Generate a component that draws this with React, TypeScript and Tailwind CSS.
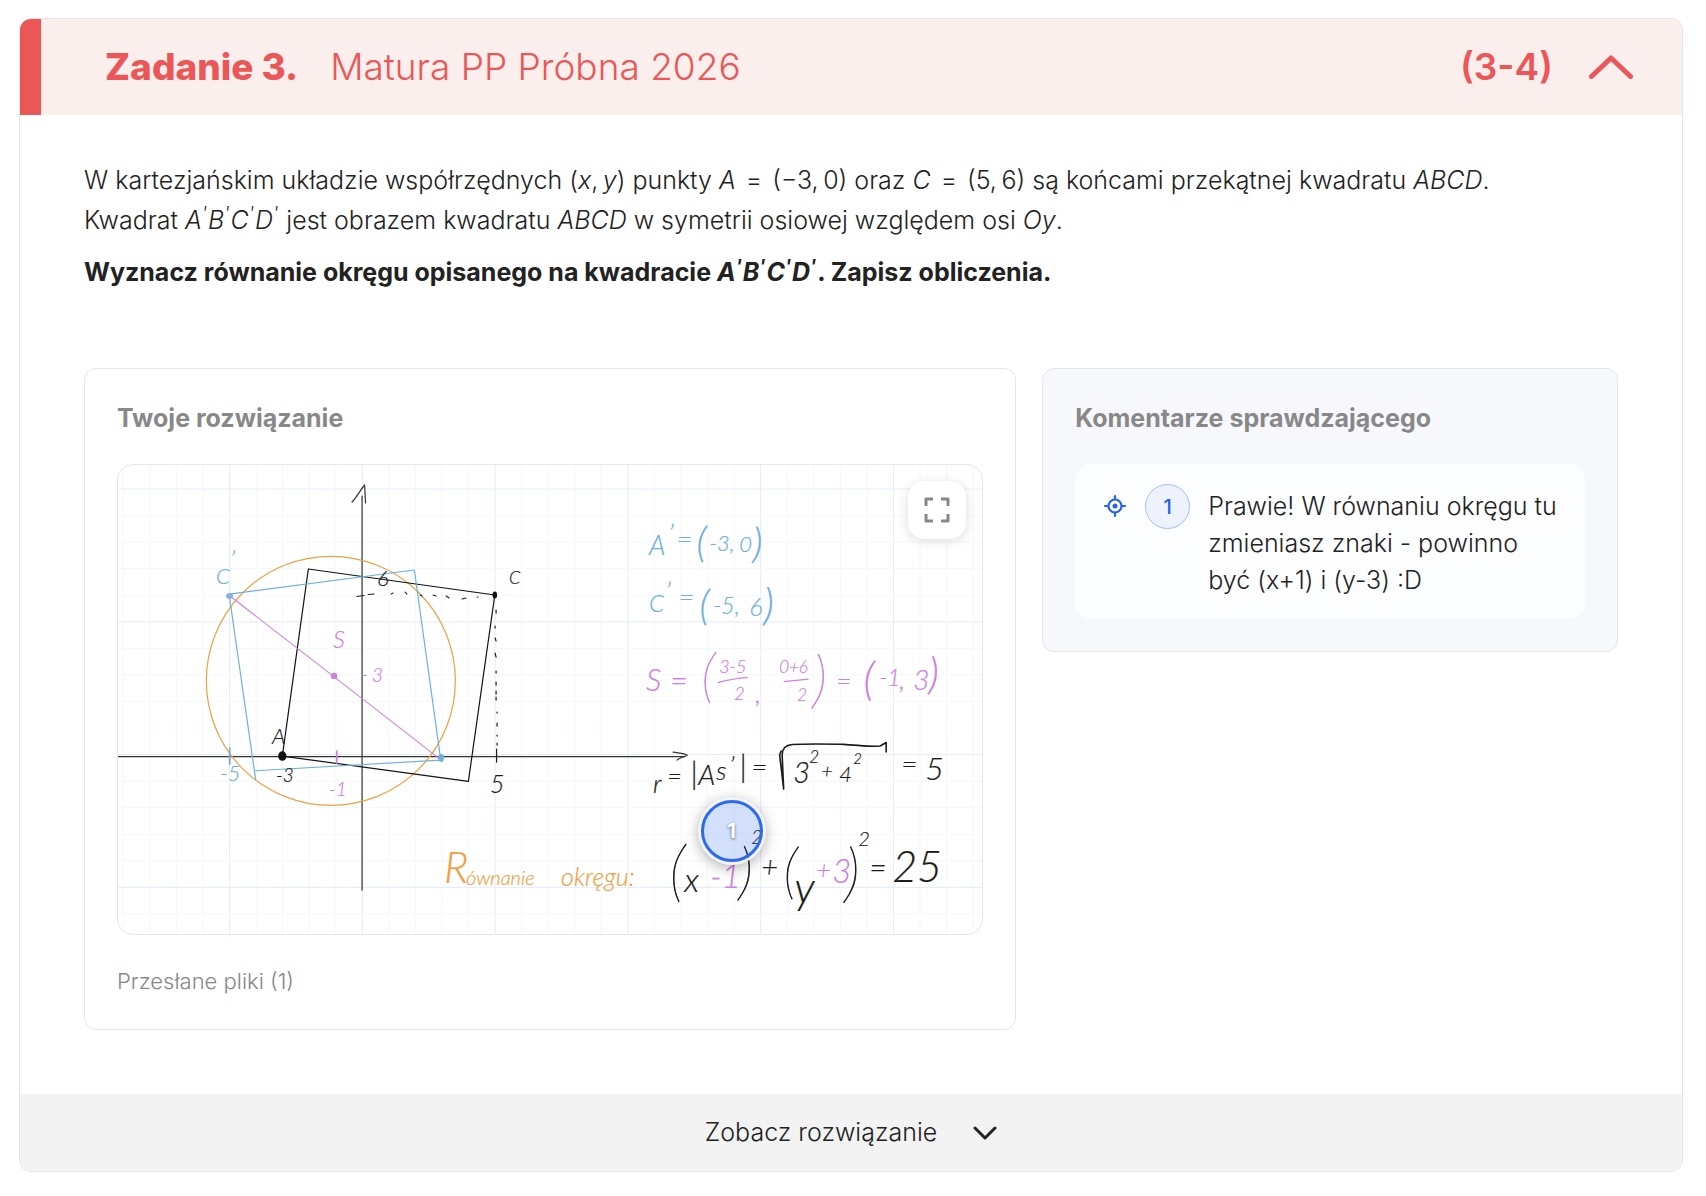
import { useState } from 'react'
import type { ReactNode } from 'react'

const INK = '#1b1b1b'
const BLUE = '#6fb0dc'
const PURPLE = '#cf7fe0'
const ORANGE = '#efa03f'

const SHEET_WIDTH = 864
const SHEET_HEIGHT = 469
const CELL = 26.55

type Note = { x: number; y: number; size: number; color: string; text: string }

const NOTES: Note[] = [
  // labels on the plot
  { x: 98, y: 119, size: 22, color: BLUE, text: 'C' },
  { x: 112, y: 104, size: 26, color: BLUE, text: '’' },
  { x: 259, y: 121, size: 22, color: INK, text: '6' },
  { x: 391, y: 119, size: 18, color: INK, text: 'C' },
  { x: 215, y: 183, size: 24, color: PURPLE, text: 'S' },
  { x: 242, y: 217, size: 22, color: PURPLE, text: '-' },
  { x: 254, y: 217, size: 19, color: PURPLE, text: '3' },
  { x: 154, y: 279, size: 22, color: INK, text: 'A' },
  { x: 102, y: 316, size: 22, color: BLUE, text: '-5' },
  { x: 158, y: 317, size: 19, color: INK, text: '-3' },
  { x: 211, y: 331, size: 19, color: PURPLE, text: '-1' },
  { x: 372, y: 328, size: 25, color: INK, text: '5' },

  // A' = (-3, 0)
  { x: 531, y: 90, size: 27, color: BLUE, text: 'A' },
  { x: 550, y: 79, size: 28, color: BLUE, text: '’' },
  { x: 558, y: 84, size: 28, color: BLUE, text: '=' },
  { x: 578, y: 92, size: 42, color: BLUE, text: '(' },
  { x: 591, y: 86, size: 22, color: BLUE, text: '-3,' },
  { x: 621, y: 87, size: 22, color: BLUE, text: '0' },
  { x: 634, y: 93, size: 42, color: BLUE, text: ')' },

  // C' = (-5, 6)
  { x: 531, y: 147, size: 24, color: BLUE, text: 'C' },
  { x: 547, y: 137, size: 28, color: BLUE, text: '’' },
  { x: 560, y: 142, size: 28, color: BLUE, text: '=' },
  { x: 581, y: 155, size: 42, color: BLUE, text: '(' },
  { x: 595, y: 149, size: 23, color: BLUE, text: '-5,' },
  { x: 631, y: 151, size: 25, color: BLUE, text: '6' },
  { x: 645, y: 155, size: 43, color: BLUE, text: ')' },

  // S
  { x: 528, y: 226, size: 31, color: PURPLE, text: 'S' },
  { x: 552, y: 226, size: 30, color: PURPLE, text: '=' },
  { x: 583, y: 231, size: 58, color: PURPLE, text: '(' },
  { x: 601, y: 208, size: 18, color: PURPLE, text: '3-5' },
  { x: 616, y: 235, size: 18, color: PURPLE, text: '2' },
  { x: 637, y: 238, size: 28, color: PURPLE, text: ',' },
  { x: 661, y: 208, size: 17, color: PURPLE, text: '0+6' },
  { x: 679, y: 236, size: 17, color: PURPLE, text: '2' },
  { x: 694, y: 236, size: 62, color: PURPLE, text: ')' },
  { x: 718, y: 225, size: 26, color: PURPLE, text: '=' },
  { x: 745, y: 230, size: 46, color: PURPLE, text: '(' },
  { x: 761, y: 221, size: 23, color: PURPLE, text: '-1' },
  { x: 781, y: 224, size: 28, color: PURPLE, text: ',' },
  { x: 795, y: 225, size: 28, color: PURPLE, text: '3' },
  { x: 810, y: 224, size: 43, color: PURPLE, text: ')' },

  // radius
  { x: 535, y: 328, size: 26, color: INK, text: 'r' },
  { x: 549, y: 320, size: 25, color: INK, text: '=' },
  { x: 572, y: 319, size: 32, color: INK, text: '|' },
  { x: 580, y: 320, size: 28, color: INK, text: 'A' },
  { x: 598, y: 315, size: 26, color: INK, text: 's' },
  { x: 611, y: 310, size: 26, color: INK, text: '’' },
  { x: 621, y: 312, size: 32, color: INK, text: '|' },
  { x: 633, y: 312, size: 28, color: INK, text: '=' },
  { x: 675, y: 318, size: 29, color: INK, text: '3' },
  { x: 691, y: 298, size: 17, color: INK, text: '2' },
  { x: 703, y: 313, size: 20, color: INK, text: '+' },
  { x: 721, y: 317, size: 22, color: INK, text: '4' },
  { x: 735, y: 299, size: 15, color: INK, text: '2' },
  { x: 783, y: 309, size: 28, color: INK, text: '=' },
  { x: 807, y: 315, size: 32, color: INK, text: '5' },

  // circle equation
  { x: 551, y: 429, size: 66, color: INK, text: '(' },
  { x: 566, y: 427, size: 34, color: INK, text: 'x' },
  { x: 592, y: 423, size: 32, color: PURPLE, text: '-' },
  { x: 603, y: 423, size: 34, color: PURPLE, text: '1' },
  { x: 620, y: 428, size: 62, color: INK, text: ')' },
  { x: 633, y: 379, size: 19, color: INK, text: '2' },
  { x: 643, y: 413, size: 29, color: INK, text: '+' },
  { x: 665, y: 427, size: 60, color: INK, text: '(' },
  { x: 676, y: 438, size: 44, color: INK, text: 'y' },
  { x: 698, y: 414, size: 25, color: PURPLE, text: '+' },
  { x: 714, y: 418, size: 33, color: PURPLE, text: '3' },
  { x: 726, y: 430, size: 65, color: INK, text: ')' },
  { x: 740, y: 381, size: 20, color: INK, text: '2' },
  { x: 751, y: 413, size: 30, color: INK, text: '=' },
  { x: 774, y: 417, size: 43, color: INK, text: '25' },

  // caption
  { x: 326, y: 418, size: 43, color: ORANGE, text: 'R' },
  { x: 348, y: 420, size: 20, color: ORANGE, text: 'ównanie' },
  { x: 443, y: 421, size: 25, color: ORANGE, text: 'okręgu:' },
]

function gridPositions(start: number, end: number) {
  const positions: number[] = []
  for (let p = start; p < end; p += CELL) positions.push(p)
  return positions
}

// Every fifth line is a major one
const COLUMNS = gridPositions(5.3, SHEET_WIDTH)
const ROWS = gridPositions(24, SHEET_HEIGHT)

function gridColor(index: number, majorAt: number) {
  return index % 5 === majorAt ? '#e6eff7' : '#f5f9fc'
}

function Notebook() {
  return (
    <svg
      viewBox={`0 0 ${SHEET_WIDTH} ${SHEET_HEIGHT}`}
      className="block h-auto w-full"
      fill="none"
      strokeLinecap="round"
      strokeLinejoin="round"
    >
      {COLUMNS.map((x, i) => (
        <path key={`c${i}`} d={`M${x} 0V${SHEET_HEIGHT}`} stroke={gridColor(i, 4)} strokeWidth="1.2" />
      ))}
      {ROWS.map((y, i) => (
        <path key={`r${i}`} d={`M0 ${y}H${SHEET_WIDTH}`} stroke={gridColor(i, 0)} strokeWidth="1.2" />
      ))}

      {/* Axes */}
      <g stroke="#333" strokeWidth="1.2">
        <path d="M244 31V425" />
        <path d="M234 37C238 33 243 24 246.5 20L247.5 38" />
        <path d="M0 291.5H567" />
        <path d="M555 287C560 288 566 288 569 290C567 292 562 292 559 295" />
      </g>

      <circle cx="212.8" cy="215.8" r="124.5" stroke={ORANGE} strokeWidth="1.2" />

      {/* Original square */}
      <path d="M190.3 104L376.7 130L350.3 316.3L164.3 291Z" stroke="#111" strokeWidth="1.2" />
      <path d="M238.7 131.5L246 130.5M250 129.5L256 129M273 129L275 128M287 127l2 2M302 130l2 1M315 130l3 1M328 131l3 2M344 134l4-1M359 132h1" stroke={INK} />
      <path d="M378 145v3M377 161v2M377 173l1 3M377 188l1 4M378 206v2M378 217v3M378 226v3M378 232v3M379 247v1M379 258v3M379 270v1M379 278v2M378.5 284V297" stroke={INK} strokeWidth="1.2" />

      {/* Mirrored square */}
      <path d="M111.3 129L296.3 105L322.7 295L137.7 305.7M111.3 131L137.7 315" stroke={BLUE} strokeWidth="1.2" />
      <path d="M111.7 283V299" stroke={BLUE} strokeWidth="1.8" />

      {/* Diagonal */}
      <path d="M112 131L322 294" stroke={PURPLE} strokeWidth="1.1" />
      <path d="M218.7 286V298" stroke={PURPLE} strokeWidth="1.8" />
      <circle cx="216" cy="211" r="3.2" fill={PURPLE} />
      <ellipse cx="111.5" cy="131" rx="3.5" ry="3" fill="#8aaee6" />
      <ellipse cx="323" cy="293" rx="2.8" ry="4" fill={BLUE} />
      <ellipse cx="376.7" cy="130" rx="2.3" ry="3.5" fill="#111" />
      <ellipse cx="164.3" cy="291" rx="4.2" ry="4.8" fill="#111" />

      {/* Fraction bars and the root sign */}
      <path d="M600 217.5C609 215 620 213 629 212.5M666 216.5L690 214" stroke={PURPLE} strokeWidth="1.2" />
      <path d="M663 286L661.5 290L665.5 324L664 290C664 283 668 280 674 279.5C690 278.5 710 279 725 279.3C740 280 752 282 762 281L768 277.5V287" stroke={INK} strokeWidth="1.6" />

      {/* The tallest brackets use the thin face, so that the pen stays even */}
      {NOTES.map((note, i) => (
        <text
          key={i}
          x={note.x}
          y={note.y}
          fontSize={note.size}
          fill={note.color}
          stroke={note.color}
          strokeWidth={note.size > 50 ? 0.7 : 0.2}
          className={`font-[Lato,sans-serif] italic ${note.size > 50 ? 'font-thin' : 'font-light'}`}
        >
          {note.text}
        </text>
      ))}
    </svg>
  )
}

function Prime() {
  return <sup className="mr-px text-lg leading-none">'</sup>
}

function MirroredSquare() {
  return (
    <i>
      A<Prime />B<Prime />C<Prime />D<Prime />
    </i>
  )
}

function Equals() {
  return <span className="mx-2.5">=</span>
}

function Panel({ title, className, children }: { title: string; className: string; children: ReactNode }) {
  return (
    <section className={`rounded-xl border border-[#e4e6e9] p-8 ${className}`}>
      <h3 className="mb-7 text-[25px] leading-[35px] font-bold text-[#888]">{title}</h3>
      {children}
    </section>
  )
}

function CommentItem({ number, text }: { number: number; text: string }) {
  return (
    <div className="flex items-start gap-[18px] rounded-2xl bg-[#fcfdfe] py-5 pr-5 pl-7">
      <button type="button" aria-label="Pokaż na rozwiązaniu" className="flex h-11 shrink-0 items-center">
        <svg viewBox="0 0 24 24" className="size-6" fill="none" stroke="#2563eb" strokeWidth="2.2" strokeLinecap="round">
          <circle cx="12" cy="12" r="6.5" />
          <circle cx="12" cy="12" r="2.5" fill="#2563eb" stroke="none" />
          <path d="M12 2V5M12 19V22M2 12H5M19 12H22" />
        </svg>
      </button>
      <span className="flex size-[45px] shrink-0 items-center justify-center rounded-full border border-[#a9c0f5] bg-[#edf2fd] text-xl font-medium text-[#2563eb]">
        {number}
      </span>
      <p className="pt-1 text-[25px] leading-[37px] font-light">{text}</p>
    </div>
  )
}

function App() {
  const [isOpen, setIsOpen] = useState(true)

  return (
    <main className="min-h-screen bg-white pt-[18px] pr-[23px] pb-6 pl-[19px] font-[Inter,sans-serif] text-[#222]">
      <article className="overflow-hidden rounded-xl border border-[#e5e5e5]">
        {/* Header */}
        <header className="flex h-24 items-center border-l-[21px] border-[#eb5757] bg-[#fbefee] pr-[49px] pl-16 text-[37px] text-[#eb5757]">
          <h2 className="flex flex-1 items-center gap-8">
            <span className="font-extrabold">Zadanie 3.</span>
            <span className="font-light">Matura PP Próbna 2026</span>
          </h2>
          <span className="mr-9 font-semibold">(3-4)</span>
          <button type="button" aria-label="Zwiń zadanie" aria-expanded={isOpen} onClick={() => setIsOpen(!isOpen)}>
            <svg
              viewBox="0 0 44 24"
              className={`h-6 w-11 ${isOpen ? '' : 'rotate-180'}`}
              fill="none"
              stroke="currentColor"
              strokeWidth="5"
              strokeLinecap="round"
              strokeLinejoin="round"
            >
              <path d="M2.5 21.5L22 3L41.5 21.5" />
            </svg>
          </button>
        </header>

        {isOpen && (
          <div className="px-16 pt-[45px] pb-16">
            <div className="text-[25px] leading-10 font-light">
              <p>
                W kartezjańskim układzie współrzędnych (<i>x</i>,&thinsp;<i>y</i>) punkty <i>A</i>
                <Equals />
                (−3,&thinsp;0) oraz <i>C</i>
                <Equals />
                (5,&thinsp;6) są końcami przekątnej kwadratu <i>ABCD</i>.
                <br />
                Kwadrat <MirroredSquare /> jest obrazem kwadratu <i>ABCD</i> w symetrii osiowej względem osi <i>Oy</i>.
              </p>
              <p className="mt-3 font-bold">
                Wyznacz równanie okręgu opisanego na kwadracie <MirroredSquare />. Zapisz obliczenia.
              </p>
            </div>

            <div className="mt-[76px] grid items-start gap-[26px] lg:grid-cols-[34fr_21fr]">
              <Panel title="Twoje rozwiązanie" className="bg-white">
                <div className="relative overflow-hidden rounded-2xl border border-[#e4e6e9]">
                  <Notebook />
                  <button
                    type="button"
                    aria-label="Pełny ekran"
                    className="absolute top-4 right-4 flex size-[58px] items-center justify-center rounded-2xl bg-white shadow-[0_2px_12px_rgba(0,0,0,0.14)]"
                  >
                    <svg viewBox="0 0 26 26" className="size-[26px]" fill="none" stroke="#888" strokeWidth="3">
                      <path d="M2 9V2H9M17 2H24V9M24 17V24H17M9 24H2V17" strokeLinejoin="round" />
                    </svg>
                  </button>
                  <button
                    type="button"
                    className="absolute top-[78%] left-[71%] flex size-[62px] -translate-x-1/2 -translate-y-1/2 items-center justify-center rounded-full border-[3px] border-[#2c6bee] bg-[#2563eb]/20 text-xl font-bold text-white shadow-[0_0_0_3px_rgba(245,246,248,0.95),0_3px_14px_3px_rgba(0,0,0,0.3)] [text-shadow:0_1px_3px_rgba(0,0,0,0.6)]"
                  >
                    1
                  </button>
                </div>
                <p className="mt-[30px] text-[22px] leading-8 font-light text-[#888]">Przesłane pliki (1)</p>
              </Panel>

              <Panel title="Komentarze sprawdzającego" className="bg-[#f7f8fb]">
                <CommentItem number={1} text="Prawie! W równaniu okręgu tu zmieniasz znaki - powinno być (x+1) i (y-3) :D" />
              </Panel>
            </div>
          </div>
        )}

        {/* Footer */}
        <button type="button" className="flex h-[77px] w-full items-center justify-center gap-9 bg-[#f3f3f3] text-[25px] font-light">
          Zobacz rozwiązanie
          <svg viewBox="0 0 24 14" className="h-3.5 w-6" fill="none" stroke="currentColor" strokeWidth="3" strokeLinecap="round" strokeLinejoin="round">
            <path d="M2 2L12 12L22 2" />
          </svg>
        </button>
      </article>
    </main>
  )
}

export default App
